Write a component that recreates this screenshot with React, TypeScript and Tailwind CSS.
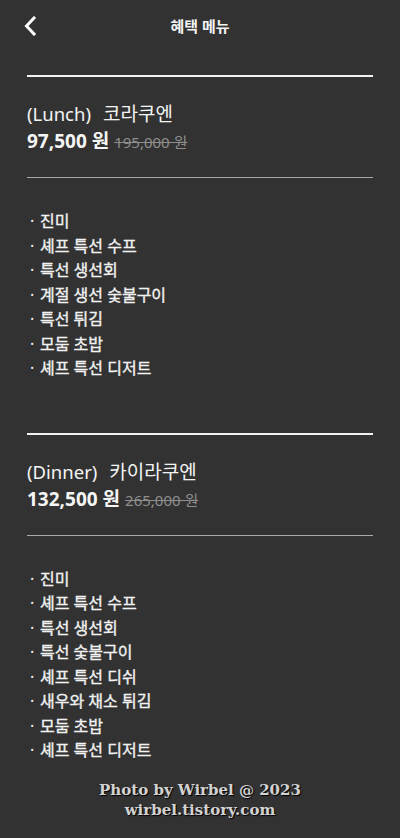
import React from "react";

const lunch = ["진미", "셰프 특선 수프", "특선 생선회", "계절 생선 숯불구이", "특선 튀김", "모둠 초밥", "셰프 특선 디저트"];
const dinner = ["진미", "셰프 특선 수프", "특선 생선회", "특선 숯불구이", "셰프 특선 디쉬", "새우와 채소 튀김", "모둠 초밥", "셰프 특선 디저트"];

function Section({ label, name, price, orig, items }: { label: string; name: string; price: string; orig: string; items: string[] }) {
  return (
    <div>
      <div className="h-[2px] bg-[#f2f2f2]" />
      <div className="pt-[24px] flex items-baseline text-[18.5px] leading-[26px] text-[#f4f4f4]">
        <span>{label}</span>
        <span className="ml-[12px] text-[19px]">{name}</span>
      </div>
      <div className="flex items-baseline gap-[5px] leading-[28px]">
        <span className="text-[19px] font-bold text-[#f6f6f6]">{price}</span>
        <span className="text-[15px] text-[#8e8e8e] line-through decoration-[#8e8e8e]">{orig}</span>
      </div>
      <div className="mt-[21px] h-px bg-[#a9a9a9]" />
      <ul className="pt-[31px] flex flex-col">
        {items.map((t, i) => (
          <li key={i} className="flex text-[16px] leading-[24.5px] text-[#f2f2f2]">
            <span className="w-[13px] pl-[3px]">·</span>
            <span className="[-webkit-text-stroke:0.35px_#f2f2f2]">{t}</span>
          </li>
        ))}
      </ul>
    </div>
  );
}

export default function App() {
  return (
    <div
      className="w-[400px] h-[838px] bg-[#323232] overflow-hidden"
      style={{ fontFamily: '"Noto Sans", "Noto Sans CJK KR", sans-serif' }}
    >
      <div className="relative h-[52px] flex items-center justify-center">
        <svg className="absolute left-[23px] top-[16px]" width="14" height="20" viewBox="0 0 14 20">
          <path d="M11 2 L3.5 10 L11 18" fill="none" stroke="#ffffff" strokeWidth="3" strokeLinecap="square" />
        </svg>
        <span className="text-[15px] font-bold text-[#f4f4f4]">혜택 메뉴</span>
      </div>
      <div className="px-[27px] pt-[23px]">
        <Section label="(Lunch)" name="코라쿠엔" price="97,500 원" orig="195,000 원" items={lunch} />
        <div className="h-[52px]" />
        <Section label="(Dinner)" name="카이라쿠엔" price="132,500 원" orig="265,000 원" items={dinner} />
        <div
          className="mt-[17px] text-center text-[15px] leading-[20px] font-bold text-[#d2d2d2]"
          style={{ fontFamily: '"DejaVu Serif", serif', textShadow: "1px 1px 1px #000" }}
        >
          <div>Photo by Wirbel @ 2023</div>
          <div>wirbel.tistory.com</div>
        </div>
      </div>
    </div>
  );
}
